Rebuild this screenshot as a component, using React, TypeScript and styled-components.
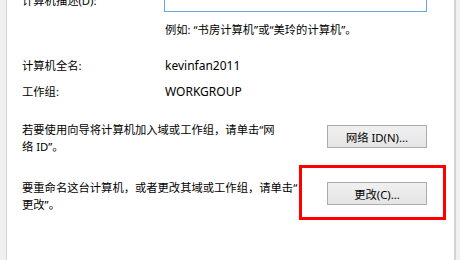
import styled, { createGlobalStyle } from "styled-components";

const GlobalStyle = createGlobalStyle`
  html, body {
    margin: 0;
    padding: 0;
    background: #ffffff;
    overflow: hidden;
  }
  body {
    font-family: "Noto Sans", "Noto Sans CJK SC", sans-serif;
    font-size: 11.3px;
    color: #000000;
  }
`;

export default function App() {
  return (
    <>
      <GlobalStyle />
      <Window>
        <LeftEdge />
        <Content>
          <Row $mt={0} $h={23}>
            <Label>计算机描述(D):</Label>
            <TextInput />
          </Row>
          <Row $mt={9}>
            <Label />
            <Value>例如: “书房计算机”或“美玲的计算机”。</Value>
          </Row>
          <Row $mt={19}>
            <Label>计算机全名:</Label>
            <Value $latin>kevinfan2011</Value>
          </Row>
          <Row $mt={9}>
            <Label>工作组:</Label>
            <Value $latin>WORKGROUP</Value>
          </Row>

          <ActionRow $mt={21}>
            <Paragraph>
              若要使用向导将计算机加入域或工作组，请单击“网
              <br />
              络 ID”。
            </Paragraph>
            <Button $mt={4}>网络 ID(N)...</Button>
          </ActionRow>

          <ActionRow $mt={24}>
            <Paragraph>
              要重命名这台计算机，或者更改其域或工作组，请单击“
              <br />
              更改”。
            </Paragraph>
            <Highlight $mt={3}>
              <Button $mt={0}>更改(C)...</Button>
              <RedBox />
            </Highlight>
          </ActionRow>
        </Content>
        <RightEdge />
      </Window>
    </>
  );
}

const Window = styled.div`
  display: flex;
  width: 460px;
  height: 260px;
  overflow: hidden;
  background: #ffffff;
`;

const LeftEdge = styled.div`
  width: 6px;
  flex-shrink: 0;
  background: #f0f0f0;
  border-right: 1px solid #d4d4d4;
`;

const RightEdge = styled.div`
  width: 4px;
  flex-shrink: 0;
  background: #f0f0f0;
  border-left: 2px solid #d4d4d4;
`;

const Content = styled.div`
  flex: 1;
  display: flex;
  flex-direction: column;
  margin-top: -11px;
  padding: 0 27px 0 15px;
`;

const Row = styled.div<{ $mt: number; $h?: number }>`
  display: flex;
  align-items: center;
  margin-top: ${(p) => p.$mt}px;
  height: ${(p) => (p.$h ? `${p.$h}px` : "17px")};
  line-height: 17px;
  white-space: nowrap;
`;

const Label = styled.div`
  width: 142px;
  flex-shrink: 0;
`;

const Value = styled.div<{ $latin?: boolean }>`
  padding-left: 1px;
  font-size: ${(p) => (p.$latin ? "12px" : "inherit")};
`;

const TextInput = styled.div`
  flex: 1;
  height: 23px;
  box-sizing: border-box;
  border: 1px solid #6aa6e6;
  background: #ffffff;
`;

const ActionRow = styled.div<{ $mt: number }>`
  display: flex;
  align-items: flex-start;
  justify-content: space-between;
  margin-top: ${(p) => p.$mt}px;
`;

const Paragraph = styled.div`
  line-height: 17px;
  white-space: nowrap;
`;

const Button = styled.div<{ $mt: number }>`
  width: 100px;
  height: 23px;
  box-sizing: border-box;
  margin-top: ${(p) => p.$mt}px;
  border: 1px solid #acacac;
  background: linear-gradient(#f0f0f0, #e5e5e5);
  display: flex;
  align-items: center;
  justify-content: center;
  flex-shrink: 0;
  white-space: nowrap;
`;

const Highlight = styled.div<{ $mt: number }>`
  position: relative;
  margin-top: ${(p) => p.$mt}px;
`;

const RedBox = styled.div`
  position: absolute;
  left: -28px;
  top: -17px;
  right: -19px;
  bottom: -15px;
  border: 3px solid #ff0000;
  pointer-events: none;
`;
